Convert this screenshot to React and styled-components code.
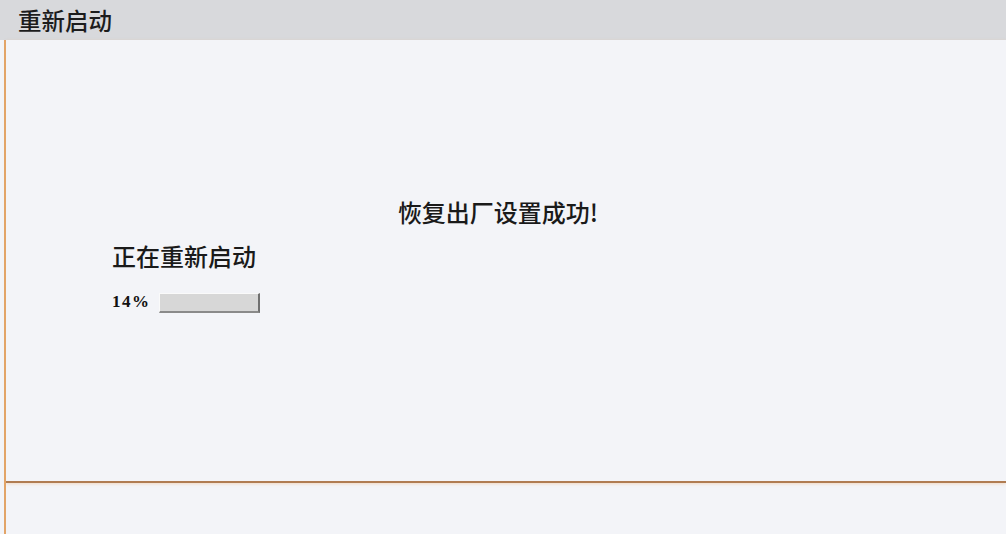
import React from "react";
import styled, { createGlobalStyle } from "styled-components";

const GlobalStyle = createGlobalStyle`
  html, body {
    margin: 0;
    padding: 0;
    background: #f3f4f8;
  }
  body {
    font-family: "Noto Sans CJK SC", "Noto Sans", sans-serif;
    color: #1a1a1a;
  }
`;

const Page = styled.div`
  width: 1006px;
  height: 534px;
  display: flex;
  flex-direction: column;
  background: #f3f4f8;
  overflow: hidden;
`;

const Header = styled.div`
  height: 40px;
  flex: none;
  background: #d8d9dc;
  display: flex;
  align-items: center;
  padding-left: 18px;
  font-size: 23.5px;
  font-weight: 500;
  color: #1c1c1c;
`;

const Body = styled.div`
  flex: 1;
  display: flex;
  flex-direction: column;
  margin-left: 4px;
  border-left: 2px solid #e2a468;
`;

const Content = styled.div`
  height: 443px;
  flex: none;
  border-bottom: 2px solid #b07c52;
  box-shadow: 0 1px 3px rgba(240, 170, 100, 0.35);
  display: flex;
  flex-direction: column;
  padding-top: 156px;
  box-sizing: border-box;
`;

const Message = styled.div`
  text-align: center;
  font-size: 24px;
  font-weight: 500;
  line-height: 32px;
  padding-right: 16px;
`;

const Restart = styled.div`
  margin-left: 106px;
  margin-top: 12px;
  display: flex;
  flex-direction: column;
  gap: 19px;
`;

const RestartLabel = styled.div`
  font-size: 24px;
  font-weight: 500;
  line-height: 32px;
`;

const ProgressRow = styled.div`
  display: flex;
  align-items: center;
  gap: 8px;
`;

const Percent = styled.span`
  font-family: "Liberation Serif", "DejaVu Serif", serif;
  font-weight: bold;
  font-size: 17px;
  letter-spacing: 1.5px;
  color: #111;
`;

const Bar = styled.div`
  width: 101px;
  height: 20px;
  border-top: 1px solid #fafafa;
  border-left: 1px solid #fafafa;
  border-right: 2px solid #707070;
  border-bottom: 2px solid #8a8a8a;
  background: #d7d7d7;
  box-sizing: border-box;
  margin-top: 2px;
`;

const Footer = styled.div`
  flex: 1;
`;

export default function App() {
  return (
    <Page>
      <GlobalStyle />
      <Header>重新启动</Header>
      <Body>
        <Content>
          <Message>恢复出厂设置成功!</Message>
          <Restart>
            <RestartLabel>正在重新启动</RestartLabel>
            <ProgressRow>
              <Percent>14%</Percent>
              <Bar />
            </ProgressRow>
          </Restart>
        </Content>
        <Footer />
      </Body>
    </Page>
  );
}
